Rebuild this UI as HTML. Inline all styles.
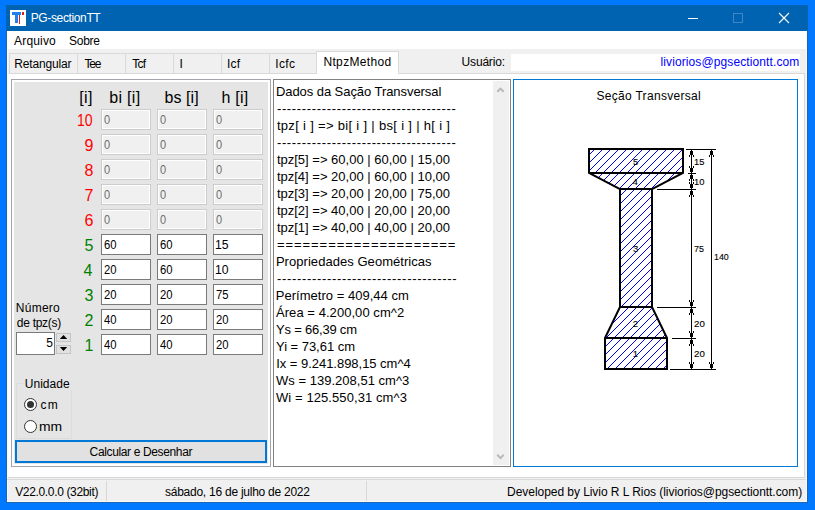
<!DOCTYPE html>
<html><head><meta charset="utf-8"><style>
*{margin:0;padding:0;box-sizing:border-box}
html,body{width:815px;height:510px;overflow:hidden;background:#0078ff;font-family:"Liberation Sans",sans-serif}
.b{position:absolute}
.t{position:absolute;white-space:pre;font-family:"Liberation Sans",sans-serif}
.tbd{position:absolute;width:50px;height:21px;border:1px solid #cccccc;background:#f0f0f0;box-shadow:inset 0 0 0 1px #fff}
.tbe{position:absolute;width:50px;height:21px;border:1px solid #7a7a7a;background:#fff}

</style></head><body>
<div class="b" style="left:6px;top:5px;width:802px;height:498px;background:#f0f0f0;border:1px solid #1766b8;border-top:none"></div>
<div class="b" style="left:7px;top:31px;width:800px;height:471px;border:1px solid #fbf8f5;border-top:none"></div>
<div class="b" style="left:6px;top:5px;width:802px;height:26px;background:#0063b1"></div>
<div class="b" style="left:10px;top:10px;width:16px;height:16px;background:#fff"></div>
<div class="b" style="left:12px;top:12px;width:9px;height:3px;background:#1e7ff0"></div>
<div class="b" style="left:15px;top:14px;width:3px;height:9px;background:#1e7ff0"></div>
<div class="b" style="left:19px;top:15px;width:1px;height:9px;background:#e02020"></div>
<div class="b" style="left:22px;top:12px;width:2px;height:3px;background:#e02020"></div>
<div class="b" style="left:688px;top:18px;width:10px;height:1px;background:#fff"></div>
<div class="b" style="left:733px;top:13px;width:10px;height:10px;border:1px solid #4385c6"></div>
<svg class="b" style="left:778px;top:12px" width="12" height="12"><path d="M1 1 L11 11 M11 1 L1 11" stroke="#fff" stroke-width="1.1"/></svg>
<div class="b" style="left:7px;top:31px;width:799px;height:18px;background:#fff"></div>
<div class="b" style="left:8px;top:74px;width:796px;height:403px;background:#fff"></div>
<div class="b" style="left:804px;top:73px;width:1px;height:405px;background:#d9d9d9"></div>
<div class="b" style="left:8px;top:477px;width:797px;height:1px;background:#d9d9d9"></div>
<div class="b" style="left:7px;top:479px;width:799px;height:1px;background:#dadada"></div>
<div class="b" style="left:9px;top:53px;width:308px;height:21px;background:#f0f0f0;border-top:1px solid #d9d9d9"></div>
<div class="b" style="left:9px;top:73px;width:796px;height:1px;background:#d9d9d9"></div>
<div class="b" style="left:9px;top:53px;width:1px;height:21px;background:#d9d9d9"></div>
<div class="b" style="left:77px;top:53px;width:1px;height:21px;background:#d9d9d9"></div>
<div class="b" style="left:125px;top:53px;width:1px;height:21px;background:#d9d9d9"></div>
<div class="b" style="left:173px;top:53px;width:1px;height:21px;background:#d9d9d9"></div>
<div class="b" style="left:221px;top:53px;width:1px;height:21px;background:#d9d9d9"></div>
<div class="b" style="left:269px;top:53px;width:1px;height:21px;background:#d9d9d9"></div>
<div class="b" style="left:316px;top:51px;width:83px;height:23px;background:#fff;border:1px solid #d9d9d9;border-bottom:none"></div>
<div class="b" style="left:511px;top:54px;width:289px;height:17px;background:#fff"></div>
<div class="b" style="left:11px;top:79px;width:260px;height:388px;border:1px solid #a4a4ac;background:#fff"></div>
<div class="b" style="left:14px;top:82px;width:254px;height:382px;background:#e5e5e5"></div>
<div class="tbd" style="left:101px;top:109px"></div>
<div class="tbd" style="left:157px;top:109px"></div>
<div class="tbd" style="left:213px;top:109px"></div>
<div class="tbd" style="left:101px;top:134px"></div>
<div class="tbd" style="left:157px;top:134px"></div>
<div class="tbd" style="left:213px;top:134px"></div>
<div class="tbd" style="left:101px;top:159px"></div>
<div class="tbd" style="left:157px;top:159px"></div>
<div class="tbd" style="left:213px;top:159px"></div>
<div class="tbd" style="left:101px;top:184px"></div>
<div class="tbd" style="left:157px;top:184px"></div>
<div class="tbd" style="left:213px;top:184px"></div>
<div class="tbd" style="left:101px;top:209px"></div>
<div class="tbd" style="left:157px;top:209px"></div>
<div class="tbd" style="left:213px;top:209px"></div>
<div class="tbe" style="left:101px;top:234px"></div>
<div class="tbe" style="left:157px;top:234px"></div>
<div class="tbe" style="left:213px;top:234px"></div>
<div class="tbe" style="left:101px;top:259px"></div>
<div class="tbe" style="left:157px;top:259px"></div>
<div class="tbe" style="left:213px;top:259px"></div>
<div class="tbe" style="left:101px;top:284px"></div>
<div class="tbe" style="left:157px;top:284px"></div>
<div class="tbe" style="left:213px;top:284px"></div>
<div class="tbe" style="left:101px;top:309px"></div>
<div class="tbe" style="left:157px;top:309px"></div>
<div class="tbe" style="left:213px;top:309px"></div>
<div class="tbe" style="left:101px;top:334px"></div>
<div class="tbe" style="left:157px;top:334px"></div>
<div class="tbe" style="left:213px;top:334px"></div>
<div class="b" style="left:16px;top:332px;width:39px;height:23px;border:1px solid #7a7a7a;background:#fff"></div>
<div class="b" style="left:56px;top:333px;width:15px;height:9px;border:1px solid #c4c4c4;background:#e1e1e1"></div>
<div class="b" style="left:56px;top:345px;width:15px;height:9px;border:1px solid #c4c4c4;background:#e1e1e1"></div>
<svg class="b" style="left:56px;top:333px" width="15" height="21"><path d="M3.8 6 L11.2 6 L7.5 2 Z M3.8 14 L11.2 14 L7.5 18 Z" fill="#000"/></svg>
<div class="b" style="left:16px;top:383px;width:56px;height:56px;border:1px solid #dcdcdc"></div>
<div class="b" style="left:23px;top:378px;width:50px;height:12px;background:#e5e5e5"></div>
<div class="b" style="left:24px;top:398px;width:13px;height:13px;border-radius:50%;border:1px solid #333;background:#fff"></div>
<div class="b" style="left:27px;top:401px;width:7px;height:7px;border-radius:50%;background:#333"></div>
<div class="b" style="left:24px;top:420px;width:13px;height:13px;border-radius:50%;border:1px solid #333;background:#fff"></div>
<div class="b" style="left:15px;top:440px;width:252px;height:23px;border:2px solid #0078d7;background:#e1e1e1"></div>
<div class="b" style="left:273px;top:79px;width:238px;height:388px;border:1px solid #828282;background:#fff"></div>
<div class="b" style="left:493px;top:81px;width:16px;height:384px;background:#f0f0f0"></div>
<svg class="b" style="left:0;top:0" width="815" height="510"><path d="M497.3 91.8 L500.5 88.6 L503.7 91.8" stroke="#b8b8b8" stroke-width="2" fill="none"/><path d="M497.3 454.8 L500.5 458.1 L503.7 454.8" stroke="#b8b8b8" stroke-width="2" fill="none"/></svg>
<div class="b" style="left:513px;top:79px;width:285px;height:388px;border:1px solid #0078d7;background:#fff"></div>
<svg class="b" style="left:0;top:0" width="815" height="510" shape-rendering="crispEdges"><defs><pattern id="h" patternUnits="userSpaceOnUse" x="0" y="0" width="8" height="8"><rect x="0" y="7" width="1" height="1" fill="#0000ff"/><rect x="1" y="6" width="1" height="1" fill="#0000ff"/><rect x="2" y="5" width="1" height="1" fill="#0000ff"/><rect x="3" y="4" width="1" height="1" fill="#0000ff"/><rect x="4" y="3" width="1" height="1" fill="#0000ff"/><rect x="5" y="2" width="1" height="1" fill="#0000ff"/><rect x="6" y="1" width="1" height="1" fill="#0000ff"/><rect x="7" y="0" width="1" height="1" fill="#0000ff"/></pattern></defs><polygon points="589,149 683,149 683,173 652,189 652,307 667,338 667,369 605,369 605,338 620,307 620,189 589,173" fill="url(#h)" stroke="none"/><polygon points="589,149 683,149 683,173 652,189 652,307 667,338 667,369 605,369 605,338 620,307 620,189 589,173" fill="none" stroke="#000" stroke-width="2" stroke-linejoin="miter" shape-rendering="auto"/><rect x="589" y="172" width="94" height="2" fill="#000"/><rect x="620" y="188" width="32" height="2" fill="#000"/><rect x="620" y="306" width="32" height="2" fill="#000"/><rect x="605" y="337" width="62" height="2" fill="#000"/><rect x="691" y="149" width="1" height="221" fill="#000"/><rect x="711" y="149" width="1" height="221" fill="#000"/><rect x="686" y="149" width="30" height="1" fill="#000"/><rect x="688" y="173" width="8" height="1" fill="#000"/><rect x="657" y="189" width="39" height="1" fill="#000"/><rect x="657" y="307" width="39" height="1" fill="#000"/><rect x="672" y="338" width="24" height="1" fill="#000"/><rect x="670" y="369" width="46" height="1" fill="#000"/><rect x="690" y="151" width="3" height="4" fill="#000"/><rect x="689" y="155" width="1" height="2" fill="#000"/><rect x="693" y="155" width="1" height="2" fill="#000"/><rect x="690" y="168" width="3" height="4" fill="#000"/><rect x="689" y="166" width="1" height="2" fill="#000"/><rect x="693" y="166" width="1" height="2" fill="#000"/><rect x="690" y="175" width="3" height="4" fill="#000"/><rect x="689" y="179" width="1" height="2" fill="#000"/><rect x="693" y="179" width="1" height="2" fill="#000"/><rect x="690" y="184" width="3" height="4" fill="#000"/><rect x="689" y="182" width="1" height="2" fill="#000"/><rect x="693" y="182" width="1" height="2" fill="#000"/><rect x="690" y="191" width="3" height="4" fill="#000"/><rect x="689" y="195" width="1" height="2" fill="#000"/><rect x="693" y="195" width="1" height="2" fill="#000"/><rect x="690" y="302" width="3" height="4" fill="#000"/><rect x="689" y="300" width="1" height="2" fill="#000"/><rect x="693" y="300" width="1" height="2" fill="#000"/><rect x="690" y="309" width="3" height="4" fill="#000"/><rect x="689" y="313" width="1" height="2" fill="#000"/><rect x="693" y="313" width="1" height="2" fill="#000"/><rect x="690" y="333" width="3" height="4" fill="#000"/><rect x="689" y="331" width="1" height="2" fill="#000"/><rect x="693" y="331" width="1" height="2" fill="#000"/><rect x="690" y="340" width="3" height="4" fill="#000"/><rect x="689" y="344" width="1" height="2" fill="#000"/><rect x="693" y="344" width="1" height="2" fill="#000"/><rect x="690" y="364" width="3" height="4" fill="#000"/><rect x="689" y="362" width="1" height="2" fill="#000"/><rect x="693" y="362" width="1" height="2" fill="#000"/><rect x="710" y="151" width="3" height="4" fill="#000"/><rect x="709" y="155" width="1" height="2" fill="#000"/><rect x="713" y="155" width="1" height="2" fill="#000"/><rect x="710" y="364" width="3" height="4" fill="#000"/><rect x="709" y="362" width="1" height="2" fill="#000"/><rect x="713" y="362" width="1" height="2" fill="#000"/></svg>
<div class="b" style="left:106px;top:481px;width:1px;height:20px;background:#d7d7d7"></div>
<div class="b" style="left:366px;top:481px;width:1px;height:20px;background:#d7d7d7"></div>
<div class="t" style="left:30.70px;top:12.00px;font-size:12px;line-height:12px;letter-spacing:-0.364px;color:#fff;">PG-sectionTT</div>
<div class="t" style="left:14.10px;top:35.00px;font-size:12px;line-height:12px;letter-spacing:0.167px;color:#000;">Arquivo</div>
<div class="t" style="left:69.00px;top:35.00px;font-size:12px;line-height:12px;letter-spacing:-0.250px;color:#000;">Sobre</div>
<div class="t" style="left:14.30px;top:58.00px;font-size:12px;line-height:12px;letter-spacing:-0.178px;color:#000;">Retangular</div>
<div class="t" style="left:84.40px;top:58.00px;font-size:12px;line-height:12px;letter-spacing:-1.200px;color:#000;">Tee</div>
<div class="t" style="left:132.30px;top:58.00px;font-size:12px;line-height:12px;letter-spacing:-0.750px;color:#000;">Tcf</div>
<div class="t" style="left:179.60px;top:58.00px;font-size:12px;line-height:12px;letter-spacing:0.000px;color:#000;">I</div>
<div class="t" style="left:227.00px;top:58.00px;font-size:12px;line-height:12px;letter-spacing:0.250px;color:#000;">Icf</div>
<div class="t" style="left:275.30px;top:58.00px;font-size:12px;line-height:12px;letter-spacing:0.333px;color:#000;">Icfc</div>
<div class="t" style="left:323.40px;top:56.00px;font-size:12px;line-height:12px;letter-spacing:0.356px;color:#000;">NtpzMethod</div>
<div class="t" style="left:461.60px;top:56.00px;font-size:12px;line-height:12px;letter-spacing:-0.186px;color:#000;">Usuário:</div>
<div class="t" style="left:660.50px;top:56.00px;font-size:12px;line-height:12px;letter-spacing:0.108px;color:#0000ff;">liviorios@pgsectiontt.com</div>
<div class="t" style="left:79.20px;top:90.00px;font-size:16px;line-height:16px;letter-spacing:0.400px;color:#000;">[i]</div>
<div class="t" style="left:109.30px;top:90.00px;font-size:16px;line-height:16px;letter-spacing:0.300px;color:#000;">bi [i]</div>
<div class="t" style="left:164.50px;top:90.00px;font-size:16px;line-height:16px;letter-spacing:0.080px;color:#000;">bs [i]</div>
<div class="t" style="left:221.50px;top:90.00px;font-size:16px;line-height:16px;letter-spacing:0.250px;color:#000;">h [i]</div>
<div class="t" style="left:76.82px;top:113.00px;font-size:16px;line-height:16px;letter-spacing:0.000px;color:#ff0000;transform:scaleX(0.8765);transform-origin:0 0;">10</div>
<div class="t" style="left:84.60px;top:138.00px;font-size:16px;line-height:16px;letter-spacing:0.000px;color:#ff0000;">9</div>
<div class="t" style="left:84.60px;top:163.00px;font-size:16px;line-height:16px;letter-spacing:0.000px;color:#ff0000;">8</div>
<div class="t" style="left:84.60px;top:188.00px;font-size:16px;line-height:16px;letter-spacing:0.000px;color:#ff0000;">7</div>
<div class="t" style="left:84.60px;top:213.00px;font-size:16px;line-height:16px;letter-spacing:0.000px;color:#ff0000;">6</div>
<div class="t" style="left:84.60px;top:238.00px;font-size:16px;line-height:16px;letter-spacing:0.000px;color:#008000;">5</div>
<div class="t" style="left:83.60px;top:263.00px;font-size:16px;line-height:16px;letter-spacing:0.000px;color:#008000;">4</div>
<div class="t" style="left:84.60px;top:288.00px;font-size:16px;line-height:16px;letter-spacing:0.000px;color:#008000;">3</div>
<div class="t" style="left:84.60px;top:313.00px;font-size:16px;line-height:16px;letter-spacing:0.000px;color:#008000;">2</div>
<div class="t" style="left:84.60px;top:338.00px;font-size:16px;line-height:16px;letter-spacing:0.000px;color:#008000;">1</div>
<div class="t" style="left:104.00px;top:114.00px;font-size:12px;line-height:12px;letter-spacing:0.000px;color:#6d6d6d;transform:scaleX(0.9167);transform-origin:0 0;">0</div>
<div class="t" style="left:160.00px;top:114.00px;font-size:12px;line-height:12px;letter-spacing:0.000px;color:#6d6d6d;transform:scaleX(0.9167);transform-origin:0 0;">0</div>
<div class="t" style="left:216.00px;top:114.00px;font-size:12px;line-height:12px;letter-spacing:0.000px;color:#6d6d6d;transform:scaleX(0.9167);transform-origin:0 0;">0</div>
<div class="t" style="left:104.00px;top:139.00px;font-size:12px;line-height:12px;letter-spacing:0.000px;color:#6d6d6d;transform:scaleX(0.9167);transform-origin:0 0;">0</div>
<div class="t" style="left:160.00px;top:139.00px;font-size:12px;line-height:12px;letter-spacing:0.000px;color:#6d6d6d;transform:scaleX(0.9167);transform-origin:0 0;">0</div>
<div class="t" style="left:216.00px;top:139.00px;font-size:12px;line-height:12px;letter-spacing:0.000px;color:#6d6d6d;transform:scaleX(0.9167);transform-origin:0 0;">0</div>
<div class="t" style="left:104.00px;top:164.00px;font-size:12px;line-height:12px;letter-spacing:0.000px;color:#6d6d6d;transform:scaleX(0.9167);transform-origin:0 0;">0</div>
<div class="t" style="left:160.00px;top:164.00px;font-size:12px;line-height:12px;letter-spacing:0.000px;color:#6d6d6d;transform:scaleX(0.9167);transform-origin:0 0;">0</div>
<div class="t" style="left:216.00px;top:164.00px;font-size:12px;line-height:12px;letter-spacing:0.000px;color:#6d6d6d;transform:scaleX(0.9167);transform-origin:0 0;">0</div>
<div class="t" style="left:104.00px;top:189.00px;font-size:12px;line-height:12px;letter-spacing:0.000px;color:#6d6d6d;transform:scaleX(0.9167);transform-origin:0 0;">0</div>
<div class="t" style="left:160.00px;top:189.00px;font-size:12px;line-height:12px;letter-spacing:0.000px;color:#6d6d6d;transform:scaleX(0.9167);transform-origin:0 0;">0</div>
<div class="t" style="left:216.00px;top:189.00px;font-size:12px;line-height:12px;letter-spacing:0.000px;color:#6d6d6d;transform:scaleX(0.9167);transform-origin:0 0;">0</div>
<div class="t" style="left:104.00px;top:214.00px;font-size:12px;line-height:12px;letter-spacing:0.000px;color:#6d6d6d;transform:scaleX(0.9167);transform-origin:0 0;">0</div>
<div class="t" style="left:160.00px;top:214.00px;font-size:12px;line-height:12px;letter-spacing:0.000px;color:#6d6d6d;transform:scaleX(0.9167);transform-origin:0 0;">0</div>
<div class="t" style="left:216.00px;top:214.00px;font-size:12px;line-height:12px;letter-spacing:0.000px;color:#6d6d6d;transform:scaleX(0.9167);transform-origin:0 0;">0</div>
<div class="t" style="left:104.00px;top:239.00px;font-size:12px;line-height:12px;letter-spacing:0.000px;color:#000;transform:scaleX(0.9385);transform-origin:0 0;">60</div>
<div class="t" style="left:160.00px;top:239.00px;font-size:12px;line-height:12px;letter-spacing:0.000px;color:#000;transform:scaleX(0.9385);transform-origin:0 0;">60</div>
<div class="t" style="left:214.98px;top:239.00px;font-size:12px;line-height:12px;letter-spacing:0.000px;color:#000;transform:scaleX(1.0167);transform-origin:0 0;">15</div>
<div class="t" style="left:104.00px;top:264.00px;font-size:12px;line-height:12px;letter-spacing:0.000px;color:#000;transform:scaleX(0.9385);transform-origin:0 0;">20</div>
<div class="t" style="left:160.00px;top:264.00px;font-size:12px;line-height:12px;letter-spacing:0.000px;color:#000;transform:scaleX(0.9385);transform-origin:0 0;">60</div>
<div class="t" style="left:214.98px;top:264.00px;font-size:12px;line-height:12px;letter-spacing:0.000px;color:#000;transform:scaleX(1.0167);transform-origin:0 0;">10</div>
<div class="t" style="left:104.00px;top:289.00px;font-size:12px;line-height:12px;letter-spacing:0.000px;color:#000;transform:scaleX(0.9385);transform-origin:0 0;">20</div>
<div class="t" style="left:160.00px;top:289.00px;font-size:12px;line-height:12px;letter-spacing:0.000px;color:#000;transform:scaleX(0.9385);transform-origin:0 0;">20</div>
<div class="t" style="left:216.00px;top:289.00px;font-size:12px;line-height:12px;letter-spacing:0.000px;color:#000;transform:scaleX(0.9385);transform-origin:0 0;">75</div>
<div class="t" style="left:104.00px;top:314.00px;font-size:12px;line-height:12px;letter-spacing:0.000px;color:#000;transform:scaleX(0.9385);transform-origin:0 0;">40</div>
<div class="t" style="left:160.00px;top:314.00px;font-size:12px;line-height:12px;letter-spacing:0.000px;color:#000;transform:scaleX(0.9385);transform-origin:0 0;">20</div>
<div class="t" style="left:216.00px;top:314.00px;font-size:12px;line-height:12px;letter-spacing:0.000px;color:#000;transform:scaleX(0.9385);transform-origin:0 0;">20</div>
<div class="t" style="left:104.00px;top:339.00px;font-size:12px;line-height:12px;letter-spacing:0.000px;color:#000;transform:scaleX(0.9385);transform-origin:0 0;">40</div>
<div class="t" style="left:160.00px;top:339.00px;font-size:12px;line-height:12px;letter-spacing:0.000px;color:#000;transform:scaleX(0.9385);transform-origin:0 0;">40</div>
<div class="t" style="left:216.00px;top:339.00px;font-size:12px;line-height:12px;letter-spacing:0.000px;color:#000;transform:scaleX(0.9385);transform-origin:0 0;">20</div>
<div class="t" style="left:15.80px;top:302.00px;font-size:12px;line-height:12px;letter-spacing:0.260px;color:#000;">Número</div>
<div class="t" style="left:16.80px;top:317.00px;font-size:12px;line-height:12px;letter-spacing:-0.275px;color:#000;">de tpz(s)</div>
<div class="t" style="left:46.20px;top:337.00px;font-size:12px;line-height:12px;letter-spacing:0.000px;color:#000;">5</div>
<div class="t" style="left:24.70px;top:378.00px;font-size:12px;line-height:12px;letter-spacing:0.050px;color:#000;">Unidade</div>
<div class="t" style="left:40.60px;top:399.00px;font-size:12px;line-height:12px;letter-spacing:1.200px;color:#000;">cm</div>
<div class="t" style="left:39.44px;top:421.00px;font-size:12px;line-height:12px;letter-spacing:0.000px;color:#000;transform:scaleX(1.1611);transform-origin:0 0;">mm</div>
<div class="t" style="left:89.60px;top:446.00px;font-size:12px;line-height:12px;letter-spacing:-0.361px;color:#000;">Calcular e Desenhar</div>
<div class="t" style="left:275.90px;top:85.00px;font-size:13px;line-height:13px;letter-spacing:-0.060px;color:#000;">Dados da Sação Transversal</div>
<div class="t" style="left:276.90px;top:102.00px;font-size:13px;line-height:13px;letter-spacing:0.657px;color:#000;">------------------------------------</div>
<div class="t" style="left:276.90px;top:119.00px;font-size:13px;line-height:13px;letter-spacing:0.314px;color:#000;">tpz[ i ] =&gt; bi[ i ] | bs[ i ] | h[ i ]</div>
<div class="t" style="left:276.90px;top:136.00px;font-size:13px;line-height:13px;letter-spacing:0.657px;color:#000;">------------------------------------</div>
<div class="t" style="left:276.90px;top:153.00px;font-size:13px;line-height:13px;letter-spacing:0.003px;color:#000;">tpz[5] =&gt; 60,00 | 60,00 | 15,00</div>
<div class="t" style="left:276.90px;top:170.00px;font-size:13px;line-height:13px;letter-spacing:0.003px;color:#000;">tpz[4] =&gt; 20,00 | 60,00 | 10,00</div>
<div class="t" style="left:276.90px;top:187.00px;font-size:13px;line-height:13px;letter-spacing:0.003px;color:#000;">tpz[3] =&gt; 20,00 | 20,00 | 75,00</div>
<div class="t" style="left:276.90px;top:204.00px;font-size:13px;line-height:13px;letter-spacing:0.003px;color:#000;">tpz[2] =&gt; 40,00 | 20,00 | 20,00</div>
<div class="t" style="left:276.90px;top:221.00px;font-size:13px;line-height:13px;letter-spacing:0.003px;color:#000;">tpz[1] =&gt; 40,00 | 40,00 | 20,00</div>
<div class="t" style="left:276.90px;top:238.00px;font-size:13px;line-height:13px;letter-spacing:0.955px;color:#000;">=====================</div>
<div class="t" style="left:275.90px;top:255.00px;font-size:13px;line-height:13px;letter-spacing:0.048px;color:#000;">Propriedades Geométricas</div>
<div class="t" style="left:276.90px;top:272.00px;font-size:13px;line-height:13px;letter-spacing:0.680px;color:#000;">------------------------------------</div>
<div class="t" style="left:275.80px;top:289.00px;font-size:13px;line-height:13px;letter-spacing:0.020px;color:#000;">Perímetro = 409,44 cm</div>
<div class="t" style="left:276.00px;top:306.00px;font-size:13px;line-height:13px;letter-spacing:0.053px;color:#000;">Área = 4.200,00 cm^2</div>
<div class="t" style="left:276.00px;top:323.00px;font-size:13px;line-height:13px;letter-spacing:-0.208px;color:#000;">Ys = 66,39 cm</div>
<div class="t" style="left:276.00px;top:340.00px;font-size:13px;line-height:13px;letter-spacing:-0.033px;color:#000;">Yi = 73,61 cm</div>
<div class="t" style="left:276.20px;top:357.00px;font-size:13px;line-height:13px;letter-spacing:-0.029px;color:#000;">Ix = 9.241.898,15 cm^4</div>
<div class="t" style="left:276.00px;top:374.00px;font-size:13px;line-height:13px;letter-spacing:0.021px;color:#000;">Ws = 139.208,51 cm^3</div>
<div class="t" style="left:276.00px;top:391.00px;font-size:13px;line-height:13px;letter-spacing:0.084px;color:#000;">Wi = 125.550,31 cm^3</div>
<div class="t" style="left:596.40px;top:90.00px;font-size:12px;line-height:12px;letter-spacing:0.312px;color:#000;">Seção Transversal</div>
<div class="t" style="left:633.10px;top:157.00px;font-size:9.5px;line-height:9.5px;letter-spacing:0.000px;color:#000;-webkit-text-stroke:0.12px #000;">5</div>
<div class="t" style="left:632.50px;top:177.00px;font-size:9.5px;line-height:9.5px;letter-spacing:0.000px;color:#000;-webkit-text-stroke:0.12px #000;">4</div>
<div class="t" style="left:632.90px;top:244.00px;font-size:9.5px;line-height:9.5px;letter-spacing:0.000px;color:#000;-webkit-text-stroke:0.12px #000;">3</div>
<div class="t" style="left:632.80px;top:319.00px;font-size:9.5px;line-height:9.5px;letter-spacing:0.000px;color:#000;-webkit-text-stroke:0.12px #000;">2</div>
<div class="t" style="left:632.70px;top:349.00px;font-size:9.5px;line-height:9.5px;letter-spacing:0.000px;color:#000;-webkit-text-stroke:0.12px #000;">1</div>
<div class="t" style="left:693.71px;top:157.00px;font-size:9.5px;line-height:9.5px;letter-spacing:0.000px;color:#000;transform:scaleX(0.9889);transform-origin:0 0;-webkit-text-stroke:0.12px #000;">15</div>
<div class="t" style="left:693.71px;top:177.00px;font-size:9.5px;line-height:9.5px;letter-spacing:0.000px;color:#000;transform:scaleX(0.9889);transform-origin:0 0;-webkit-text-stroke:0.12px #000;">10</div>
<div class="t" style="left:694.40px;top:244.00px;font-size:9.5px;line-height:9.5px;letter-spacing:0.000px;color:#000;transform:scaleX(0.9400);transform-origin:0 0;-webkit-text-stroke:0.12px #000;">75</div>
<div class="t" style="left:694.10px;top:319.00px;font-size:9.5px;line-height:9.5px;letter-spacing:0.000px;color:#000;transform:scaleX(1.0200);transform-origin:0 0;-webkit-text-stroke:0.12px #000;">20</div>
<div class="t" style="left:694.10px;top:349.00px;font-size:9.5px;line-height:9.5px;letter-spacing:0.000px;color:#000;transform:scaleX(1.0200);transform-origin:0 0;-webkit-text-stroke:0.12px #000;">20</div>
<div class="t" style="left:713.87px;top:252.00px;font-size:9.5px;line-height:9.5px;letter-spacing:0.000px;color:#000;transform:scaleX(0.9333);transform-origin:0 0;-webkit-text-stroke:0.12px #000;">140</div>
<div class="t" style="left:15.20px;top:486.00px;font-size:12px;line-height:12px;letter-spacing:-0.344px;color:#000;">V22.0.0.0 (32bit)</div>
<div class="t" style="left:165.00px;top:486.00px;font-size:12px;line-height:12px;letter-spacing:-0.250px;color:#000;">sábado, 16 de julho de 2022</div>
<div class="t" style="left:507.10px;top:486.00px;font-size:12px;line-height:12px;letter-spacing:-0.052px;color:#000;">Developed by Livio R L Rios (liviorios@pgsectiontt.com)</div>
</body></html>
